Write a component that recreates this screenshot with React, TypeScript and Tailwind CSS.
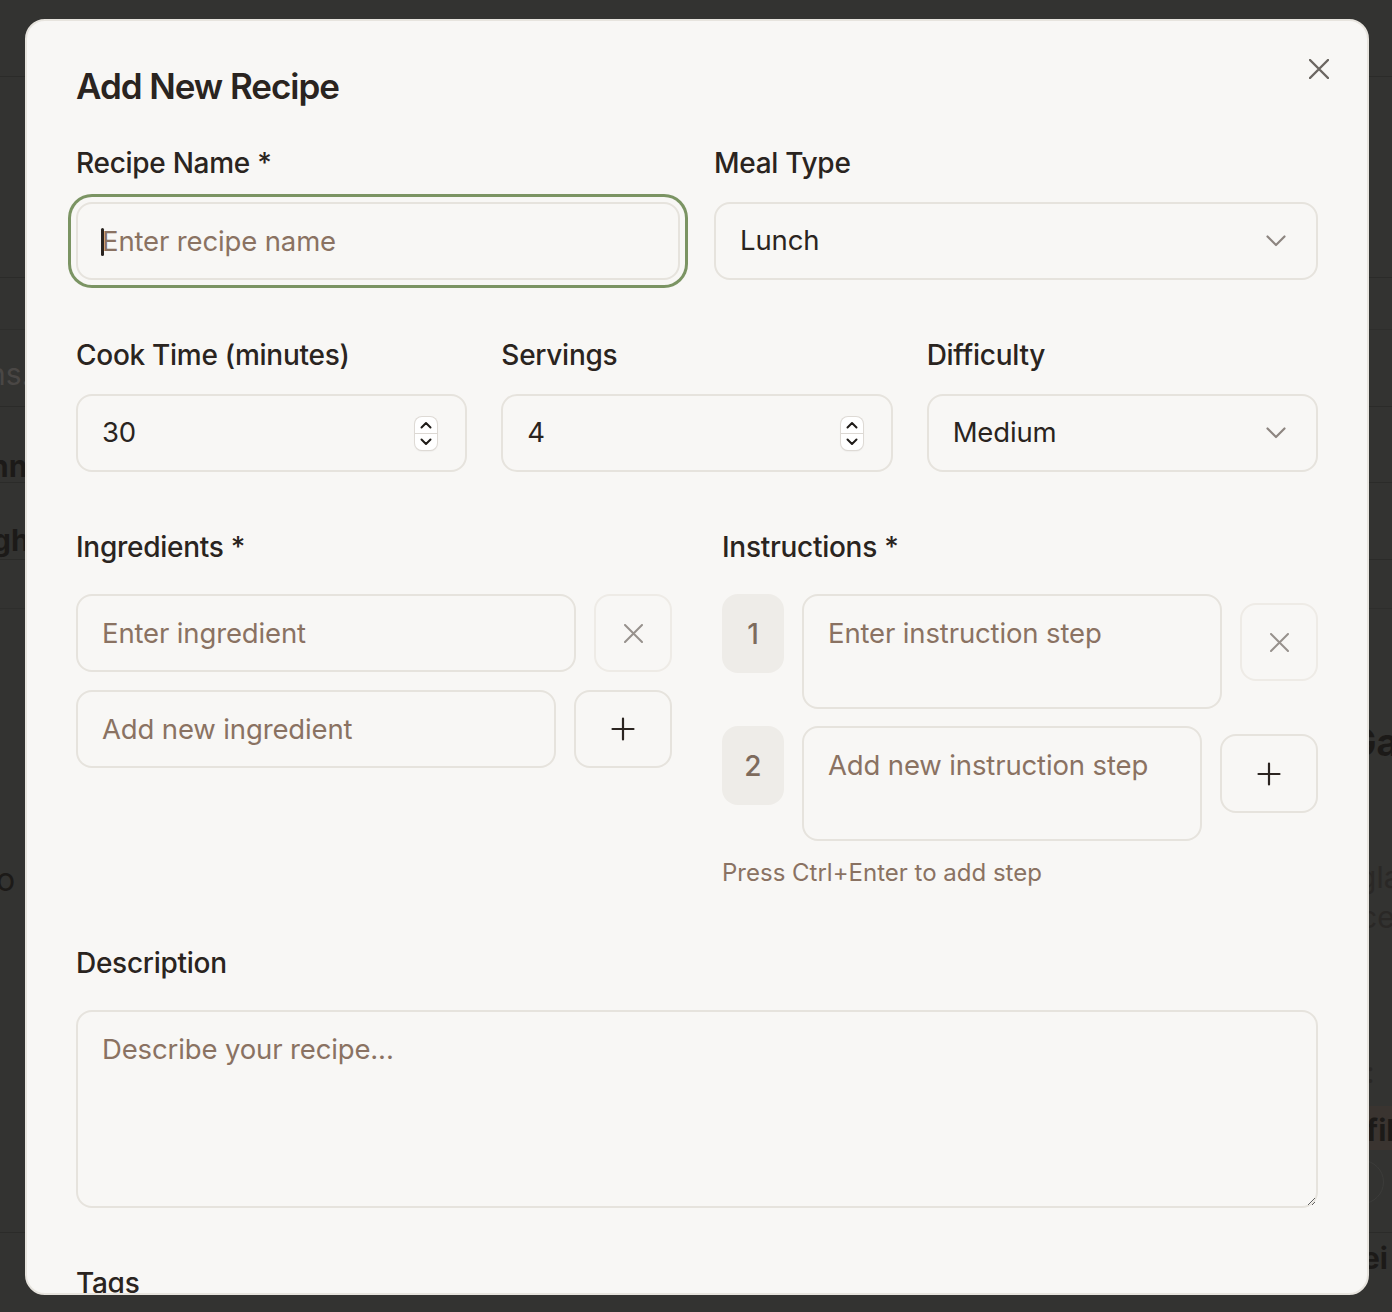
import React from "react";

const XIcon = ({ size, color, sw }: { size: number; color: string; sw: number }) => (
  <svg width={size} height={size} viewBox={`0 0 ${size} ${size}`} fill="none">
    <path d={`M1 1 L${size - 1} ${size - 1} M${size - 1} 1 L1 ${size - 1}`} stroke={color} strokeWidth={sw} strokeLinecap="round" />
  </svg>
);

const PlusIcon = () => (
  <svg width={24} height={24} viewBox="0 0 24 24" fill="none">
    <path d="M12 1.5 V22.5 M1.5 12 H22.5" stroke="#2b2420" strokeWidth={2.2} strokeLinecap="round" />
  </svg>
);

const Chevron = () => (
  <svg width={20} height={12} viewBox="0 0 20 12" fill="none">
    <path d="M1.5 1.5 L10 10 L18.5 1.5" stroke="#8d8580" strokeWidth={2.2} strokeLinecap="round" strokeLinejoin="round" />
  </svg>
);

const Spinner = () => (
  <div className="flex h-[33px] w-[22px] flex-col items-center overflow-hidden rounded-[7px] bg-white shadow-[0_0_0_1px_#dedad5,0_1px_2px_rgba(0,0,0,0.12)]">
    <div className="flex h-[16px] w-full items-center justify-center">
      <svg width={12} height={8} viewBox="0 0 12 8" fill="none">
        <path d="M1.5 6.5 L6 2 L10.5 6.5" stroke="#1f1b18" strokeWidth={2} strokeLinecap="round" strokeLinejoin="round" />
      </svg>
    </div>
    <div className="h-px w-full bg-[#dcd8d3]" />
    <div className="flex h-[16px] w-full items-center justify-center">
      <svg width={12} height={8} viewBox="0 0 12 8" fill="none">
        <path d="M1.5 1.5 L6 6 L10.5 1.5" stroke="#1f1b18" strokeWidth={2} strokeLinecap="round" strokeLinejoin="round" />
      </svg>
    </div>
  </div>
);

const Label = ({ children, mb }: { children: React.ReactNode; mb: string }) => (
  <div className={`h-[40px] text-[28px] leading-[40px] font-medium tracking-[-0.01em] text-[#2a2420] ${mb}`}>{children}</div>
);

const inputBase =
  "h-[78px] w-full rounded-[16px] border-2 border-[#e6e3dd] bg-[#f8f7f5] px-[24px] text-[27.5px] tracking-[-0.005em] text-[#2a2420] outline-none placeholder:text-[#8a7262]";

const areaBase =
  "rounded-[16px] border-2 border-[#e6e3dd] bg-[#f8f7f5] px-[24px] pt-[20px] text-[27.5px] tracking-[-0.005em] leading-[34px] text-[#2a2420] outline-none placeholder:text-[#8a7262]";

export default function App() {
  return (
    <div className="relative h-[1312px] w-[1392px] overflow-hidden bg-[#333331] font-['Inter',sans-serif]">
      {/* faint page behind the overlay */}
      <div className="absolute inset-0">
        <div className="absolute left-0 right-0 top-[76px] h-px bg-[#2b2b29]" />
        <div className="absolute left-0 right-0 top-[277px] h-px bg-[#2b2b29]" />
        <div className="absolute left-0 right-0 top-[329px] h-px bg-[#2e2e2c]" />
        <div className="absolute left-0 right-0 top-[406px] h-px bg-[#2b2b29]" />
        <div className="absolute left-0 right-0 top-[482px] h-px bg-[#2b2b29]" />
        <div className="absolute left-0 right-0 top-[559px] h-px bg-[#2b2b29]" />
        <div className="absolute left-0 right-0 top-[608px] h-px bg-[#2e2e2c]" />
        <div className="absolute left-0 right-0 top-[1232px] h-px bg-[#2b2b29]" />
        <span className="absolute left-[-12px] top-[352px] text-[30px] text-[#4a4745]">ns.</span>
        <span className="absolute left-[-10px] top-[444px] text-[30px] font-bold text-[#1c1a18]">nn</span>
        <span className="absolute left-[-8px] top-[518px] text-[30px] font-bold text-[#1c1a18]">gh</span>
        <span className="absolute left-[-4px] top-[856px] text-[32px] text-[#1c1a18]">o</span>
        <span className="absolute left-[1348px] top-[714px] text-[38px] font-bold text-[#1c1a18]">Ga</span>
        <span className="absolute left-[1358px] top-[855px] text-[30px] text-[#2a2826]">gla</span>
        <span className="absolute left-[1360px] top-[895px] text-[30px] text-[#2a2826]">ce</span>
        <span className="absolute left-[1366px] top-[1050px] text-[30px] text-[#2a2826]">:</span>
        <div className="absolute left-[1360px] top-[1106px] h-[44px] w-[40px] bg-[#3a3430]" />
        <span className="absolute left-[1366px] top-[1108px] text-[30px] font-bold text-[#1c1a18]">fil</span>
        <div className="absolute left-[1340px] top-[1160px] h-[44px] w-[44px] rounded-full border border-[#3c3c3a]" />
        <span className="absolute left-[1362px] top-[1236px] text-[30px] font-bold text-[#1c1a18]">ei</span>
      </div>

      {/* modal */}
      <div className="absolute left-[25px] top-[19px] h-[1276px] w-[1344px] overflow-hidden rounded-[20px] border-2 border-[#e7e4de] bg-[#f8f7f5]">
        <button className="absolute right-[38px] top-[38px] flex h-[20px] w-[20px] items-center justify-center">
          <XIcon size={20} color="#6b6661" sw={2.4} />
        </button>

        <div className="flex flex-col px-[49px] pt-[43px]">
          <h2 className="mb-[35px] h-[44px] text-[35px] leading-[44px] font-semibold tracking-[-0.03em] text-[#2a2420]">
            Add New Recipe
          </h2>

          <div className="flex flex-col gap-[55px]">
            {/* name + meal type */}
            <div className="grid grid-cols-2 gap-x-[34px]">
              <div>
                <Label mb="mb-[19px]">Recipe Name *</Label>
                <div className="relative">
                  <input
                    className={`${inputBase} ring-[3px] ring-[#7b9463] ring-offset-[5px] ring-offset-[#f8f7f5]`}
                    placeholder="Enter recipe name"
                  />
                  <span className="absolute left-[25px] top-[26px] h-[28px] w-[3px] rounded-full bg-[#2a2420]" />
                </div>
              </div>
              <div>
                <Label mb="mb-[19px]">Meal Type</Label>
                <div className={`${inputBase} flex items-center justify-between pr-[30px]`}>
                  <span>Lunch</span>
                  <Chevron />
                </div>
              </div>
            </div>

            {/* cook time, servings, difficulty */}
            <div className="grid grid-cols-3 gap-x-[34px]">
              <div>
                <Label mb="mb-[19px]">Cook Time (minutes)</Label>
                <div className={`${inputBase} flex items-center justify-between pr-[28px]`}>
                  <span>30</span>
                  <Spinner />
                </div>
              </div>
              <div>
                <Label mb="mb-[19px]">Servings</Label>
                <div className={`${inputBase} flex items-center justify-between pr-[28px]`}>
                  <span>4</span>
                  <Spinner />
                </div>
              </div>
              <div>
                <Label mb="mb-[19px]">Difficulty</Label>
                <div className={`${inputBase} flex items-center justify-between pr-[30px]`}>
                  <span>Medium</span>
                  <Chevron />
                </div>
              </div>
            </div>

            {/* ingredients + instructions */}
            <div className="grid grid-cols-2 gap-x-[50px]">
              <div>
                <Label mb="mb-[27px]">Ingredients *</Label>
                <div className="flex flex-col gap-[18px]">
                  <div className="flex gap-[18px]">
                    <input className={`${inputBase} flex-1`} placeholder="Enter ingredient" />
                    <button className="flex h-[78px] w-[78px] shrink-0 items-center justify-center rounded-[16px] border-2 border-[#eeebe6]">
                      <XIcon size={19} color="#97918c" sw={2} />
                    </button>
                  </div>
                  <div className="flex gap-[18px]">
                    <input className={`${inputBase} flex-1`} placeholder="Add new ingredient" />
                    <button className="flex h-[78px] w-[98px] shrink-0 items-center justify-center rounded-[16px] border-2 border-[#e6e3dd]">
                      <PlusIcon />
                    </button>
                  </div>
                </div>
              </div>

              <div>
                <Label mb="mb-[27px]">Instructions *</Label>
                <div className="flex flex-col gap-[17px]">
                  <div className="flex items-start gap-[18px]">
                    <div className="flex h-[79px] w-[62px] shrink-0 items-center justify-center rounded-[16px] bg-[#eeece8] text-[28px] font-medium text-[#7d6b5d]">
                      1
                    </div>
                    <textarea className={`${areaBase} h-[115px] flex-1 resize-none`} placeholder="Enter instruction step" />
                    <button className="mt-[9px] flex h-[78px] w-[78px] shrink-0 items-center justify-center rounded-[16px] border-2 border-[#eeebe6]">
                      <XIcon size={19} color="#97918c" sw={2} />
                    </button>
                  </div>
                  <div className="flex items-start gap-[18px]">
                    <div className="flex h-[79px] w-[62px] shrink-0 items-center justify-center rounded-[16px] bg-[#eeece8] text-[28px] font-medium text-[#7d6b5d]">
                      2
                    </div>
                    <textarea className={`${areaBase} h-[115px] flex-1 resize-none`} placeholder="Add new instruction step" />
                    <button className="mt-[8px] flex h-[79px] w-[98px] shrink-0 items-center justify-center rounded-[16px] border-2 border-[#e6e3dd]">
                      <PlusIcon />
                    </button>
                  </div>
                </div>
                <div className="mt-[17px] h-[30px] text-[24px] leading-[30px] text-[#8a7262]">
                  Press Ctrl+Enter to add step
                </div>
              </div>
            </div>

            {/* description */}
            <div>
              <Label mb="mb-[27px]">Description</Label>
              <textarea className={`${areaBase} block h-[198px] w-full`} placeholder="Describe your recipe..." />
            </div>

            {/* tags */}
            <div>
              <Label mb="mb-[19px]">Tags</Label>
            </div>
          </div>
        </div>
      </div>
    </div>
  );
}
